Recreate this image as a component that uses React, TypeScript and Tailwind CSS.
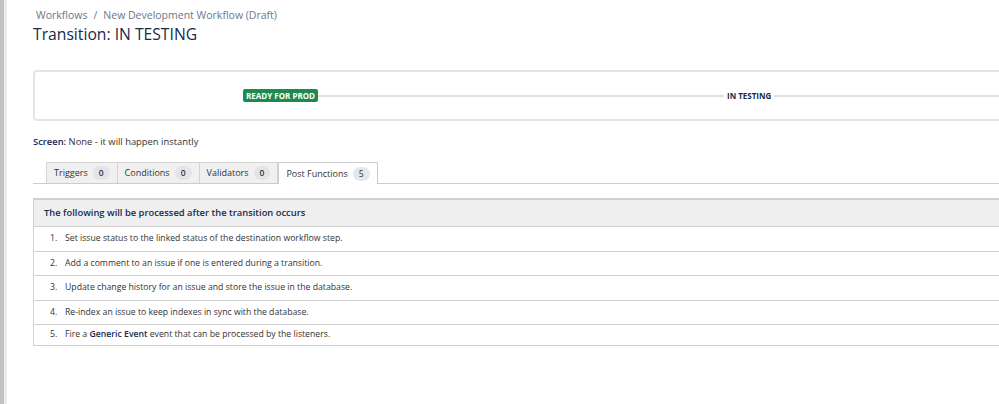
import React from "react";

type Tab = { label: string; count: number; active?: boolean };

const tabs: Tab[] = [
  { label: "Triggers", count: 0 },
  { label: "Conditions", count: 0 },
  { label: "Validators", count: 0 },
  { label: "Post Functions", count: 5, active: true },
];

const steps: React.ReactNode[] = [
  "Set issue status to the linked status of the destination workflow step.",
  "Add a comment to an issue if one is entered during a transition.",
  "Update change history for an issue and store the issue in the database.",
  "Re-index an issue to keep indexes in sync with the database.",
  <>
    Fire a <b className="font-semibold text-[#172b4d]">Generic Event</b> event
    that can be processed by the listeners.
  </>,
];

export default function App() {
  return (
    <div className="flex h-[404px] w-[999px] overflow-hidden bg-white font-['Open_Sans',sans-serif] text-[#172b4d]">
      <div className="w-[4px] shrink-0 bg-[#c1c1c1]" />
      <div className="w-[3px] shrink-0 bg-[#ececec]" />
      <main className="min-w-0 flex-1 pl-[26px]">
        <div className="h-[24px] pt-[8px] text-[10.5px] leading-[15px] text-[#6b778c]">
          <span className="pl-[3px]">Workflows</span>
          <span className="px-[6px]">/</span>
          <span>New Development Workflow (Draft)</span>
        </div>
        <h1 className="text-[15.7px] leading-[20px] text-[#172b4d]">
          Transition: IN TESTING
        </h1>

        <div className="mt-[26px] flex h-[51px] w-[1000px] items-center rounded-[4px] border-2 border-[#e4e4e4] pl-[208px]">
          <span className="rounded-[2px] bg-[#1d8a50] px-[3px] py-[1px] text-[8px] font-bold leading-[11px] text-white">
            READY FOR PROD
          </span>
          <div className="h-[2px] w-[406px] bg-[#e0e0e0]" />
          <span className="px-[3px] text-[8px] font-bold text-[#172b4d]">
            IN TESTING
          </span>
          <div className="h-[2px] flex-1 bg-[#e0e0e0]" />
        </div>

        <div className="mt-[14px] text-[9.4px] leading-[13px] text-[#333]">
          <b className="font-semibold text-[#172b4d]">Screen:</b> None - it will happen instantly
        </div>

        <div className="mt-[14px] flex border-b border-[#ccc] pl-[13px]">
          {tabs.map((t) =>
            t.active ? (
              <div
                key={t.label}
                className="-mb-px flex h-[22px] items-center gap-[5px] border border-b-0 border-[#ccc] bg-white px-[7px] text-[9px] text-[#333]"
              >
                {t.label}
                <span className="rounded-full bg-[#e4e8ee] px-[6px] text-[8.5px] leading-[14px]">
                  {t.count}
                </span>
              </div>
            ) : (
              <div
                key={t.label}
                className="flex h-[21px] items-center gap-[5px] border-r border-t border-[#d4d4d4] bg-[#f0f0f0] px-[7px] text-[9px] text-[#333] first:border-l"
              >
                {t.label}
                <span className="rounded-full bg-[#e2e4e9] px-[6px] text-[8.5px] font-semibold leading-[14px]">
                  {t.count}
                </span>
              </div>
            )
          )}
        </div>

        <div className="mt-[14px] w-[1000px] border border-t-2 border-[#d0d0d0]">
          <div className="flex h-[26px] items-center bg-[#efefef] pl-[10px] text-[9.4px] font-semibold text-[#172b4d]">
            The following will be processed after the transition occurs
          </div>
          <ol>
            {steps.map((s, i) => (
              <li
                key={i}
                className="flex h-[24.5px] items-center border-t border-[#d0d0d0] pl-[16px] text-[8.7px] text-[#333] last:h-[21px]"
              >
                <span className="w-[15px]">{i + 1}.</span>
                <span>{s}</span>
              </li>
            ))}
          </ol>
        </div>
      </main>
    </div>
  );
}
